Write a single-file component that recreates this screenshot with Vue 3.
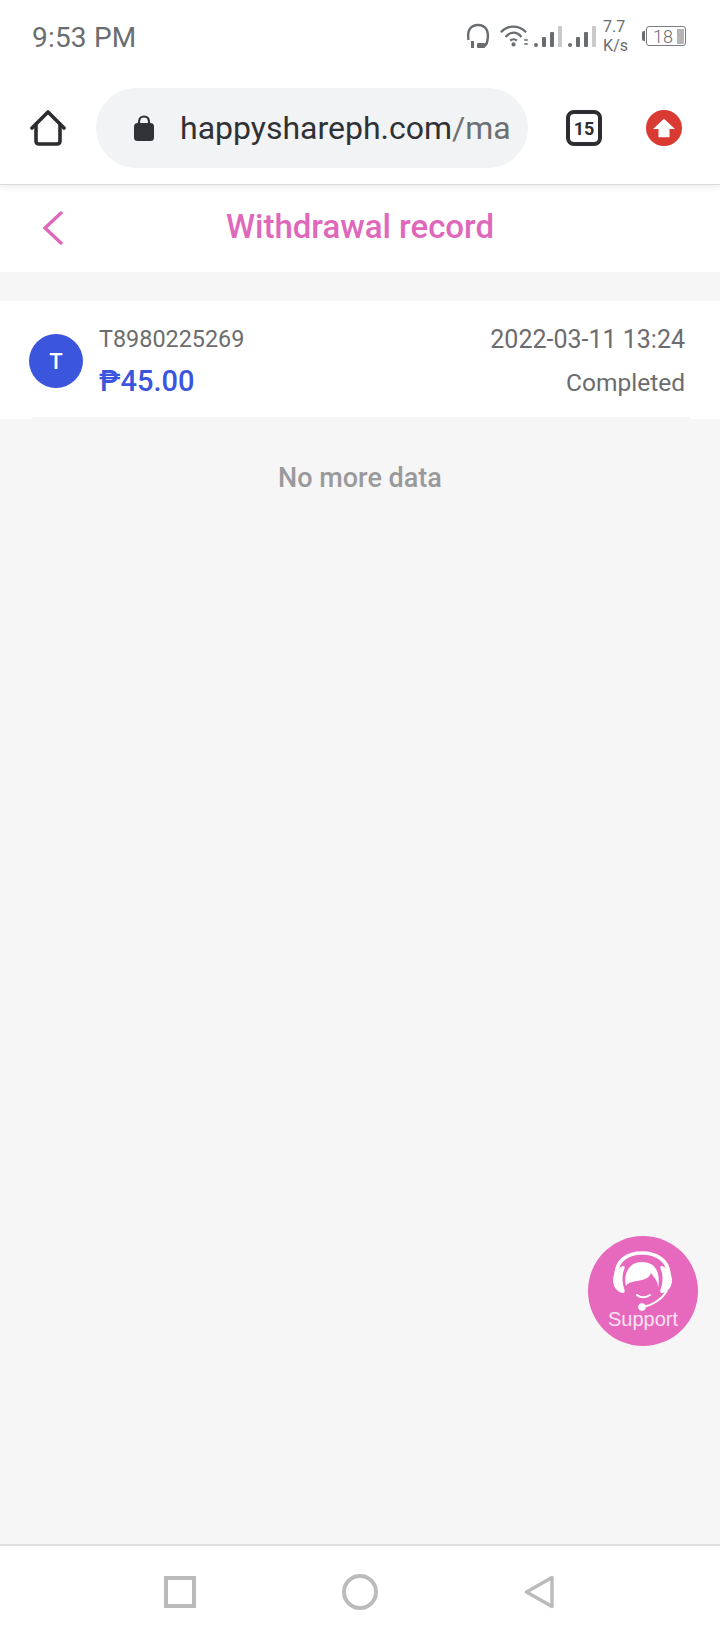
<template>
  <div class="page">
    <!-- 手机状态栏 -->
    <div class="status">
      <span class="time">9:53 PM</span>
      <div class="status-icons">
        <svg class="ic-headset" width="24" height="26" viewBox="0 0 24 26" fill="none" stroke="#6a6d70" stroke-width="2.4">
          <path d="M2.5 17 C1 8 4 2 12 2 C20 2 23 8 21.5 17 C21 21 19.5 23.5 16 23.5" />
          <rect x="5" y="18" width="3" height="7" fill="#6a6d70" stroke="none" />
          <rect x="11" y="20" width="8" height="5" rx="1" fill="#6a6d70" stroke="none" />
        </svg>
        <svg class="ic-wifi" width="28" height="24" viewBox="0 0 30 24" fill="none" stroke="#6a6d70" stroke-width="2.4">
          <path d="M1 8 C8 0 20 0 28 8" />
          <path d="M6 13 C11 7 18 7 23 13" />
          <path d="M11 17 C13 15 16 15 18 17" />
          <circle cx="14.5" cy="21" r="2.2" fill="#6a6d70" stroke="none" />
        </svg>
        <div class="updown"><i></i><i></i></div>
        <div v-for="s in 2" :key="s" class="signal">
          <i class="b1"></i><i class="b2"></i><i class="b3"></i><i class="b4"></i>
        </div>
        <div class="speed"><span>7.7</span><span>K/s</span></div>
        <div class="battery">
          <span class="nub"></span>
          <div class="cell"><span>18</span><i></i></div>
        </div>
      </div>
    </div>

    <!-- 浏览器地址栏 -->
    <div class="browser">
      <svg class="home" width="36" height="36" viewBox="0 0 36 36" fill="none" stroke="#2b2d30" stroke-width="3.6" stroke-linejoin="round" stroke-linecap="round">
        <path d="M2 18 L18 2 L34 18" />
        <path d="M6 14 V31 Q6 34 9 34 H27 Q30 34 30 31 V14" />
      </svg>
      <div class="omnibox">
        <svg class="lock" width="20" height="26" viewBox="0 0 20 26">
          <path d="M5 11 V7 C5 3.5 7 1.5 10 1.5 C13 1.5 15 3.5 15 7 V11" fill="none" stroke="#303236" stroke-width="2.2" />
          <rect x="0" y="8" width="20" height="18" rx="3.5" fill="#303236" />
        </svg>
        <div class="url">happyshareph.com<span>/ma</span></div>
      </div>
      <div class="tabs">15</div>
      <div class="update">
        <svg viewBox="0 0 26 24"><path d="M13 2 L25 13 H19 V22 H7 V13 H1 Z" fill="#fff" /></svg>
      </div>
    </div>

    <!-- 页面内容 -->
    <main class="content">
      <header class="head">
        <svg class="back" width="20" height="34" viewBox="0 0 20 34" fill="none" stroke="#e068ba" stroke-width="3.4" stroke-linecap="round">
          <path d="M18 2 L2 17 L18 32" />
        </svg>
        <h1>Withdrawal record</h1>
      </header>

      <section class="record">
        <div class="avatar">T</div>
        <div class="left">
          <div class="order">{{ record.order }}</div>
          <div class="amount">{{ record.amount }}</div>
        </div>
        <div class="right">
          <div class="date">{{ record.date }}</div>
          <div class="state">{{ record.state }}</div>
        </div>
      </section>

      <p class="nomore">No more data</p>
    </main>

    <!-- 客服悬浮按钮 -->
    <div class="support">
      <svg width="60" height="62" viewBox="0 0 60 62">
        <path d="M3 26 C3 10 15 3 29 3 C43 3 56 10 56 26" fill="none" stroke="#fff" stroke-width="3.6" />
        <path d="M10 16 C4 18 0 24 0 30 C0 37 4 42 10 43 C12 43 12 41 11 38 C9 32 9 24 11 20 C12 17 12 16 10 16 Z" fill="#fff" />
        <path d="M49 16 C55 18 59 24 59 30 C59 37 55 42 49 43 C47 43 47 41 48 38 C50 32 50 24 48 20 C47 17 47 16 49 16 Z" fill="#fff" />
        <path d="M13 36 C16 30 28 32 34 28 C36 27 37 25 38 23 C41 28 45 30 45 38 C48 22 42 12 29 12 C16 12 10 24 13 36 Z" fill="#fff" />
        <path d="M24 45 C27 48 33 48 37 45" fill="none" stroke="#fff" stroke-width="2" stroke-linecap="round" />
        <path d="M54 41 C48 50 40 55 30 57" fill="none" stroke="#fff" stroke-width="2" />
        <circle cx="29" cy="57" r="3.8" fill="#fff" />
      </svg>
      <span>Support</span>
    </div>

    <!-- 底部导航键 -->
    <nav class="navbar">
      <span class="square"></span>
      <span class="circle"></span>
      <svg width="30" height="34" viewBox="0 0 30 34" fill="none" stroke="#bbbbbb" stroke-width="3.4">
        <path d="M28 2.5 V31.5 L2.5 17 Z" stroke-linejoin="round" />
      </svg>
    </nav>
  </div>
</template>

<script setup>
const record = {
  order: 'T8980225269',
  amount: '₱45.00',
  date: '2022-03-11 13:24',
  state: 'Completed'
}
</script>

<style>
html, body {
  margin: 0;
  background: #fff;
}
</style>

<style scoped>
.page {
  position: relative;
  width: 720px;
  height: 1640px;
  display: flex;
  flex-direction: column;
  overflow: hidden;
  background: #fff;
  font-family: Roboto, "Liberation Sans", sans-serif;
}

.status {
  position: relative;
  z-index: 2;
  height: 72px;
  flex: none;
  display: flex;
  align-items: center;
  justify-content: space-between;
  padding: 0 34px 0 32px;
  box-sizing: border-box;
  background: #fff;
}
.time {
  font-size: 28px;
  color: #6a6d70;
  letter-spacing: 0.2px;
  margin-top: 3px;
}
.status-icons {
  display: flex;
  align-items: center;
}
.ic-wifi {
  margin-left: 10px;
}
.updown {
  display: flex;
  flex-direction: column;
  gap: 2px;
  margin: 12px 6px 0 -4px;
}
.updown i {
  width: 4px;
  height: 2px;
  background: #8a8d90;
  border-radius: 1px;
}
.signal {
  display: flex;
  align-items: flex-end;
  gap: 4px;
  height: 21px;
  margin-right: 6px;
  padding-top: 1px;
}
.signal i {
  width: 4px;
  background: #6a6d70;
  border-radius: 1px;
}
.signal .b1 { height: 4px; border-radius: 2px; }
.signal .b2 { height: 10px; }
.signal .b3 { height: 15px; }
.signal .b4 { height: 21px; background: #c9c9c9; }
.speed {
  display: flex;
  flex-direction: column;
  font-size: 16px;
  line-height: 19px;
  color: #6a6d70;
  margin-left: 1px;
  margin-top: -1px;
}
.battery {
  display: flex;
  align-items: center;
  margin-left: 14px;
}
.nub {
  width: 3px;
  height: 10px;
  background: #6a6d70;
  border-radius: 2px 0 0 2px;
  margin-right: 1px;
}
.cell {
  width: 40px;
  height: 20px;
  border: 1.5px solid #7a7d80;
  border-radius: 3px;
  display: flex;
  align-items: center;
  justify-content: flex-end;
  gap: 4px;
  padding: 1px;
  box-sizing: border-box;
  color: #6a6d70;
  font-size: 18px;
  font-weight: 300;
}
.cell i {
  width: 7px;
  height: 15px;
  background: #b5b5b5;
}

.browser {
  height: 112px;
  flex: none;
  display: flex;
  align-items: center;
  box-sizing: border-box;
  padding-left: 30px;
  background: #fff;
  position: relative;
  z-index: 1;
  box-shadow: 0 1px 0 #dcdcdc, 0 2px 8px rgba(0, 0, 0, 0.1);
}
.home {
  flex: none;
}
.omnibox {
  width: 432px;
  height: 80px;
  margin-left: 30px;
  border-radius: 40px;
  background: #f1f3f4;
  display: flex;
  align-items: center;
  padding-left: 38px;
  box-sizing: border-box;
  overflow: hidden;
  flex: none;
}
.lock {
  flex: none;
}
.url {
  margin-left: 26px;
  font-size: 32px;
  color: #2f3134;
  white-space: nowrap;
}
.url span {
  color: #6d7073;
}
.tabs {
  width: 36px;
  height: 36px;
  flex: none;
  margin-left: 38px;
  border: 4px solid #2b2d30;
  border-radius: 8px;
  display: flex;
  align-items: center;
  justify-content: center;
  box-sizing: border-box;
  font-size: 18px;
  font-weight: 700;
  color: #2b2d30;
}
.update {
  width: 36px;
  height: 36px;
  flex: none;
  margin-left: 44px;
  border-radius: 50%;
  background: #d93a32;
  display: flex;
  align-items: center;
  justify-content: center;
}
.update svg {
  width: 24px;
  height: 22px;
}

.content {
  flex: 1;
  background: #f6f6f7;
  min-height: 0;
}
.head {
  height: 88px;
  background: #fff;
  display: flex;
  align-items: center;
  justify-content: center;
  position: relative;
}
.head h1 {
  margin: 0 0 4px;
  font-size: 33px;
  font-weight: 500;
  color: #e068ba;
}
.back {
  position: absolute;
  left: 43px;
  top: 27px;
}

.record {
  position: relative;
  margin-top: 29px;
  height: 118px;
  background: #fff;
  display: flex;
  align-items: center;
  padding: 2px 35px 0 29px;
  box-sizing: border-box;
}
.record::after {
  content: "";
  position: absolute;
  left: 32px;
  right: 30px;
  bottom: 0;
  height: 2px;
  background: #f6f6f7;
}
.avatar {
  width: 54px;
  height: 54px;
  flex: none;
  border-radius: 50%;
  background: #3b55dc;
  color: #fff;
  font-size: 22px;
  font-weight: 500;
  display: flex;
  align-items: center;
  justify-content: center;
}
.left {
  margin-left: 16px;
  flex: 1;
}
.order {
  font-size: 23.4px;
  color: #6c6c6e;
  line-height: 30px;
  margin-top: -1px;
}
.amount {
  margin-top: 10px;
  font-size: 29px;
  font-weight: 500;
  color: #3b55dc;
  line-height: 34px;
}
.right {
  text-align: right;
}
.date,
.state {
  font-size: 25px;
  color: #6c6c6e;
  line-height: 30px;
}
.state {
  font-size: 24.5px;
  margin-top: 13px;
}

.nomore {
  margin: 43px 0 0;
  text-align: center;
  font-size: 27px;
  font-weight: 500;
  color: #9a9a9c;
  line-height: 32px;
}

.support {
  position: absolute;
  left: 588px;
  top: 1236px;
  width: 110px;
  height: 110px;
  border-radius: 50%;
  background: #e669bd;
  display: flex;
  flex-direction: column;
  align-items: center;
  color: #fbe3f3;
  box-sizing: border-box;
  padding-top: 14px;
}
.support svg {
  flex: none;
}
.support span {
  font-family: "Liberation Sans", Arial, sans-serif;
  font-size: 20px;
  line-height: 20px;
  margin-top: -3px;
}

.navbar {
  height: 96px;
  flex: none;
  background: #fff;
  border-top: 2px solid #dfdfdf;
  display: grid;
  grid-template-columns: 32px 36px 30px;
  justify-content: center;
  column-gap: 146px;
  align-items: center;
  padding: 0 2px 2px 0;
  box-sizing: border-box;
}
.square {
  width: 32px;
  height: 32px;
  border: 4px solid #bbb;
  box-sizing: border-box;
}
.circle {
  width: 36px;
  height: 36px;
  border: 4px solid #bbb;
  border-radius: 50%;
  box-sizing: border-box;
}
</style>
